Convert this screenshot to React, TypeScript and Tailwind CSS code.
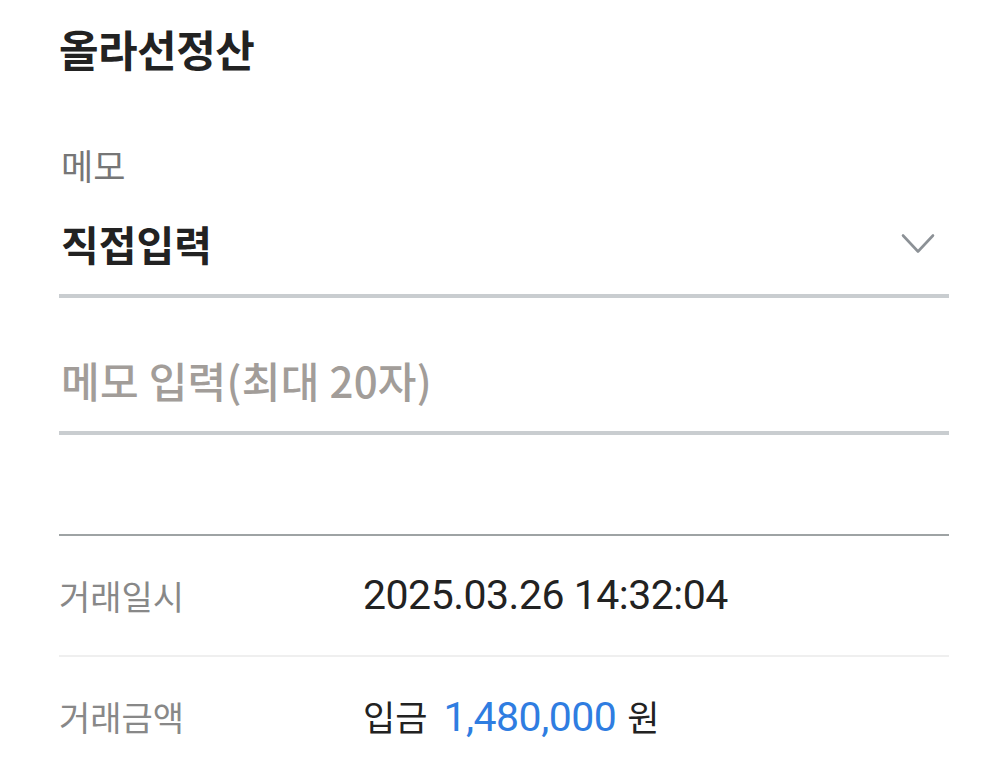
const kr = "font-['Noto_Sans_CJK_KR',sans-serif]";
const num = "font-['Roboto','Noto_Sans_CJK_KR',sans-serif]";

function ChevronDown() {
  return (
    <svg width="34" height="22" viewBox="0 0 34 22" fill="none" className="text-[#8c9196]">
      <path d="M2 2.5 L17 18.5 L32 2.5" stroke="currentColor" strokeWidth="2.6" strokeLinecap="round" strokeLinejoin="round" />
    </svg>
  );
}

interface InfoRowProps {
  label: string;
  children: React.ReactNode;
  last?: boolean;
}

function InfoRow({ label, children, last }: InfoRowProps) {
  return (
    <div
      className={
        last
          ? 'flex h-[120px] items-center'
          : 'flex h-[121px] items-center border-b-2 border-[#efefef]'
      }
    >
      <div className={`${kr} w-[304px] shrink-0 text-[34px] leading-none text-[#888888]`}>{label}</div>
      <div className={`${num} flex items-baseline text-[41px] leading-none tracking-[-0.5px] text-[#222222]`}>
        {children}
      </div>
    </div>
  );
}

export default function App() {
  return (
    <div className="min-h-[771px] bg-white px-[59px]">
      <div className="flex h-[96px] items-center">
        <h1 className={`${kr} text-[43px] font-bold leading-none tracking-[-0.5px] text-[#222222]`}>올라선정산</h1>
      </div>

      <div className={`${kr} mt-[36px] flex h-[64px] items-center pl-[2px] text-[35px] leading-none text-[#767676]`}>
        메모
      </div>

      <div className="flex h-[102px] items-center justify-between border-b-4 border-[#c9cdd0] pb-[4px]">
        <span className={`${kr} pl-[2px] text-[41px] font-bold leading-none text-[#222222]`}>직접입력</span>
        <span className="mr-[14px] mt-[2px]">
          <ChevronDown />
        </span>
      </div>

      <div className="flex h-[137px] items-center border-b-4 border-[#c9cdd0] pt-[30px]">
        <span className={`${kr} pl-[2px] text-[42px] font-medium leading-none tracking-[0.3px] text-[#a29d99]`}>
          메모 입력(최대 20자)
        </span>
      </div>

      <div className="h-[101px] border-b-2 border-[#9ea3a4]" />

      <InfoRow label="거래일시">2025.03.26 14:32:04</InfoRow>
      <InfoRow label="거래금액" last>
        <span className={`${kr} mr-[16px] text-[35px] tracking-normal`}>입금</span>
        <span className="tracking-[-0.5px] text-[#2f7de1]">1,480,000</span>
        <span className={`${kr} ml-[11px] text-[35px] tracking-normal`}>원</span>
      </InfoRow>
    </div>
  );
}
